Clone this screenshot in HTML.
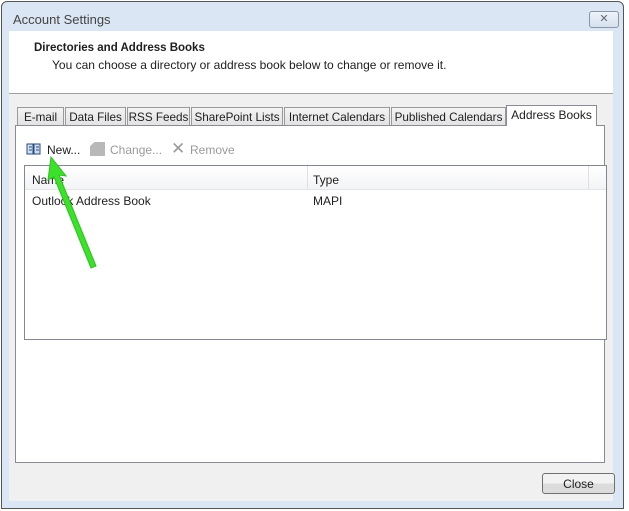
<!DOCTYPE html>
<html><head><style>
body{margin:0;width:629px;height:511px;background:#fff;position:relative;overflow:hidden;font-family:"Liberation Sans",sans-serif;font-size:12px;color:#1e1e1e}
.a{position:absolute;white-space:nowrap}
.tab{position:absolute;top:107px;height:18px;background:linear-gradient(#f4f4f4,#e2e2e2);border:1px solid #9a9a9a;border-bottom:none;box-sizing:border-box;line-height:19px;text-align:center;font-size:11.7px;white-space:nowrap;overflow:hidden}
</style></head><body>
<div class="a" style="left:1px;top:1px;width:623px;height:508px;border:1px solid #555;border-radius:6px 6px 0 0;background:#dbe6f4;box-sizing:border-box"></div>
<div class="a" style="left:13px;top:12px;font-size:13px;color:#444">Account Settings</div>
<div class="a" style="left:589px;top:11px;width:30px;height:17px;border:1px solid #8a96a8;border-radius:3px;background:linear-gradient(#eef3fa,#d6e0ee);box-sizing:border-box;text-align:center;font-size:11px;color:#667;line-height:15px">✕</div>
<div class="a" style="left:9px;top:31px;width:604px;height:470px;background:#f0f0f0"></div>
<div class="a" style="left:9px;top:31px;width:604px;height:62px;background:#fff;border-bottom:1px solid #a0a0a0"></div>
<div class="a" style="left:34px;top:42px;font-weight:bold;font-size:11.5px">Directories and Address Books</div>
<div class="a" style="left:52px;top:58px;font-size:12px">You can choose a directory or address book below to change or remove it.</div>
<div class="a" style="left:15px;top:125px;width:590px;height:338px;background:#fff;border:1px solid #898c95;box-sizing:border-box"></div>
<div class="tab" style="left:17px;width:47px">E-mail</div>
<div class="tab" style="left:65px;width:61px">Data Files</div>
<div class="tab" style="left:127px;width:63px">RSS Feeds</div>
<div class="tab" style="left:191px;width:92px">SharePoint Lists</div>
<div class="tab" style="left:284px;width:106px">Internet Calendars</div>
<div class="tab" style="left:391px;width:115px">Published Calendars</div>
<div class="a" style="left:506px;top:105px;width:91px;height:21px;background:#fff;border:1px solid #898c95;border-bottom:none;box-sizing:border-box;text-align:center;line-height:19px">Address Books</div>
<svg class="a" style="left:26px;top:142px" width="16" height="14"><path d="M1 2h6v10H1zM8 2h6v10H8z" fill="#cfe0f4" stroke="#2b4a78"/><path d="M3 5h3M3 8h3M10 5h3M10 8h3" stroke="#2b4a78"/></svg>
<div class="a" style="left:47px;top:143px">New...</div>
<div class="a" style="left:90px;top:142px;width:15px;height:14px;background:#b8b8b8;clip-path:polygon(30% 0,100% 0,100% 100%,0 100%,0 30%)"></div>
<div class="a" style="left:110px;top:143px;color:#9a9a9a">Change...</div>
<div class="a" style="left:171px;top:139px;color:#9a9a9a;font-size:17px">✕</div>
<div class="a" style="left:190px;top:143px;color:#9a9a9a">Remove</div>
<div class="a" style="left:24px;top:165px;width:583px;height:175px;border:1px solid #828790;box-sizing:border-box;background:#fff"></div>
<div class="a" style="left:25px;top:166px;width:581px;height:23px;background:linear-gradient(#fff,#f3f4f6);border-bottom:1px solid #e5e5e5"></div>
<div class="a" style="left:307px;top:166px;width:1px;height:23px;background:#e0e0e0"></div>
<div class="a" style="left:588px;top:166px;width:1px;height:23px;background:#e0e0e0"></div>
<div class="a" style="left:32px;top:173px">Name</div>
<div class="a" style="left:313px;top:173px">Type</div>
<div class="a" style="left:32px;top:194px">Outlook Address Book</div>
<div class="a" style="left:313px;top:194px">MAPI</div>
<div class="a" style="left:542px;top:473px;width:73px;height:21px;border:1px solid #707070;border-radius:3px;background:linear-gradient(#f2f2f2 50%,#dcdcdc 50%);box-sizing:border-box;text-align:center;line-height:20px">Close</div>
<svg class="a" style="left:0;top:0" width="629" height="511"><polygon points="51,157 66,176 59,175 96,266 91,268 54,177 48,180" fill="#3ce12a" stroke="#2fbf22" stroke-width="1"/></svg>
</body></html>
